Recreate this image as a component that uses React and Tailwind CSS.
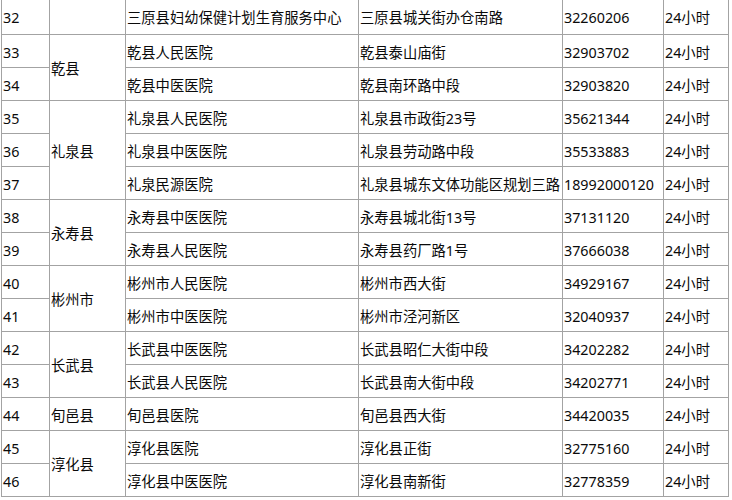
const rows = [
  ["32", null, "三原县妇幼保健计划生育服务中心", "三原县城关街办仓南路", "32260206"],
  ["33", ["乾县", 2], "乾县人民医院", "乾县泰山庙街", "32903702"],
  ["34", undefined, "乾县中医医院", "乾县南环路中段", "32903820"],
  ["35", ["礼泉县", 3], "礼泉县人民医院", "礼泉县市政街23号", "35621344"],
  ["36", undefined, "礼泉县中医医院", "礼泉县劳动路中段", "35533883"],
  ["37", undefined, "礼泉民源医院", "礼泉县城东文体功能区规划三路", "18992000120"],
  ["38", ["永寿县", 2], "永寿县中医医院", "永寿县城北街13号", "37131120"],
  ["39", undefined, "永寿县人民医院", "永寿县药厂路1号", "37666038"],
  ["40", ["彬州市", 2], "彬州市人民医院", "彬州市西大街", "34929167"],
  ["41", undefined, "彬州市中医医院", "彬州市泾河新区", "32040937"],
  ["42", ["长武县", 2], "长武县中医医院", "长武县昭仁大街中段", "34202282"],
  ["43", undefined, "长武县人民医院", "长武县南大街中段", "34202771"],
  ["44", ["旬邑县", 1], "旬邑县医院", "旬邑县西大街", "34420035"],
  ["45", ["淳化县", 2], "淳化县医院", "淳化县正街", "32775160"],
  ["46", undefined, "淳化县中医医院", "淳化县南新街", "32778359"],
];

const td = "border border-[#a3a3a3] pl-[1px] pr-0 pt-[3px] pb-0 align-middle whitespace-nowrap overflow-hidden";

export default function App() {
  return (
    <div className="w-[732px] h-[500px] bg-white overflow-hidden pl-[1px] text-[#0a0a0a] text-[14.3px] leading-[20px]" style={{ fontFamily: '"Noto Sans", "Noto Sans CJK SC", sans-serif' }}>
      <table className="table-fixed border-collapse w-[727px] -mt-[2px]">
        <colgroup>
          <col className="w-[48px]" />
          <col className="w-[76px]" />
          <col className="w-[233px]" />
          <col className="w-[204px]" />
          <col className="w-[101px]" />
          <col className="w-[65px]" />
        </colgroup>
        <tbody>
          {rows.map((r, i) => (
            <tr key={r[0]} className={i === 0 ? "h-[36px]" : "h-[33px]"}>
              <td className={td}>{r[0]}</td>
              {r[1] === null && <td className={td}></td>}
              {r[1] && (
                <td className={td} rowSpan={r[1][1]}>{r[1][0]}</td>
              )}
              <td className={td}>{r[2]}</td>
              <td className={td}>{r[3]}</td>
              <td className={td}>{r[4]}</td>
              <td className={td}>24小时</td>
            </tr>
          ))}
        </tbody>
      </table>
    </div>
  );
}
